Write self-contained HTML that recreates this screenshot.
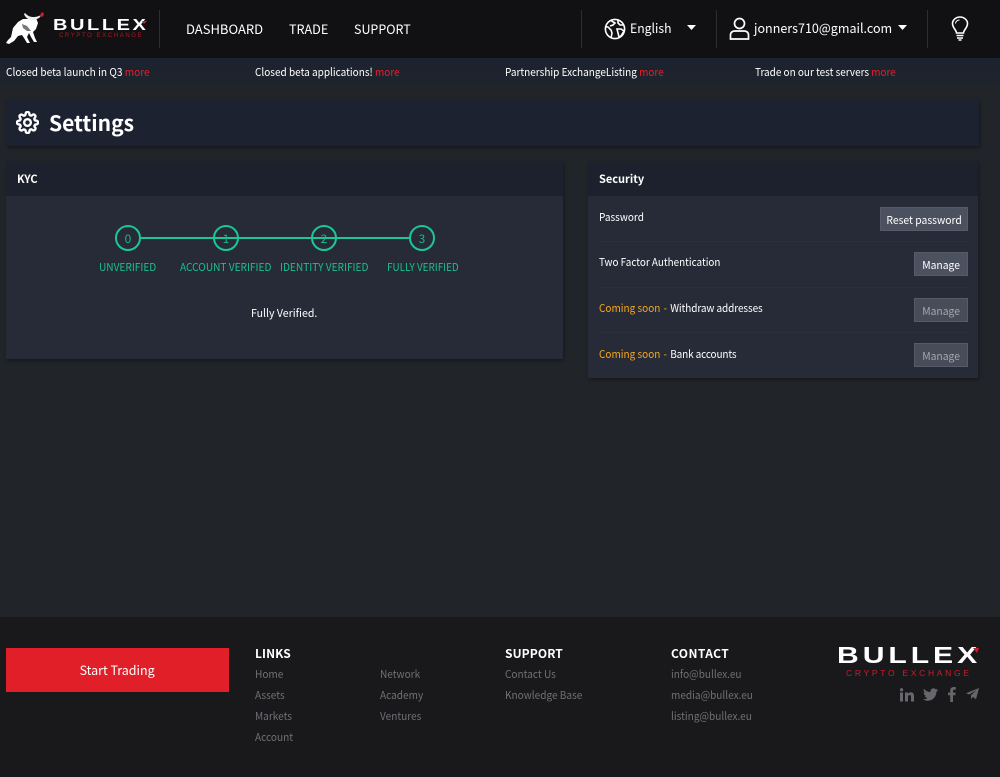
<!DOCTYPE html>
<html><head><meta charset="utf-8"><style>
html,body{margin:0;padding:0;width:1000px;height:777px;overflow:hidden;background:#212429}
body{position:relative;font-family:"Noto Sans CJK JP","Liberation Sans",sans-serif;color:#fff}
.a,.t{position:absolute}
.t{white-space:nowrap;line-height:16px;transform-origin:0 50%}
.r{color:#ee1c25}
.sep{position:absolute;top:10px;width:1px;height:38px;background:#2b2e33}
.g{color:#1bbf8f;font-size:11px;line-height:14px;position:absolute;top:260px;white-space:nowrap;transform:scaleX(.92);transform-origin:0 50%}
.c{position:absolute;top:225px;width:22px;height:22px;border:2px solid #1dc696;border-radius:50%;color:#1ab78a;font-size:12px;line-height:23px;text-align:center}
.btn{position:absolute;background:#4b515f;border:1px solid #555b68;box-sizing:border-box;height:24px;font-size:11px;line-height:24px;text-align:center;color:#fff;white-space:nowrap}
.btn span{display:inline-block;transform:scaleX(.94)}
.dis{background:#474c58;color:#a4a7ad}
.l{font-size:11px;color:#6f7074;transform:scaleX(.915)}
.h{font-size:12px;font-weight:700;letter-spacing:.1px}
.s12{font-size:11px;transform:scaleX(.91)}
.y{color:#f5a81c}
.line{position:absolute;left:599px;width:369px;height:1px;background:#2a2f3b}
</style></head><body>
<div class="a" style="left:0;top:0;width:1000px;height:58px;background:#111114"></div>
<div class="a" style="left:0;top:58px;width:1000px;height:28px;background:linear-gradient(#1c2230,#1f242c)"></div>

<svg class="a" style="left:0;top:0" width="50" height="50" viewBox="0 0 50 50"><path d="M6 43l2-3 3-3 2-9 5-6 5-3 7 0 6-1 2 5-2 6-3 3 2 6 2 4h-3l-3-5-2-4-2 4 3 6h-3l-3-5-2-3-4 1-4 5-5 3z" fill="#fff"/><path d="M25 13c2 2 4 4 8 4 4 0 6-1 8-2l-1 2c-2 2-5 3-8 3-4 0-7-3-8-6z" fill="#eee"/><path d="M40 16l1-3 2-1 1 3-2 2z" fill="#d01c24"/><path d="M22 24l5 2 4 5-4 0-4-3z" fill="#777"/></svg>

<div class="t" style="left:53px;top:18px;font-family:'Liberation Sans',sans-serif;font-weight:700;font-size:15.5px;line-height:16px;letter-spacing:2px;transform:scaleX(1.29);transform-origin:0 0">BULLEX</div>
<div class="t" style="left:59px;top:33px;font-family:'Liberation Sans',sans-serif;font-size:6px;line-height:7px;letter-spacing:1.6px;color:#a81a22">CRYPTO EXCHANGE</div>
<svg class="a" style="left:140px;top:20px" width="7" height="5"><path d="M2 1h5L4 4z" fill="#d01c24"/></svg>

<div class="sep" style="left:159px"></div>
<div class="t" style="left:186px;top:21px;font-size:13px">DASHBOARD</div>
<div class="t" style="left:289px;top:21px;font-size:13px;transform:scaleX(.97)">TRADE</div>
<div class="t" style="left:354px;top:21px;font-size:13px;transform:scaleX(.96)">SUPPORT</div>
<div class="sep" style="left:581px"></div>
<div class="sep" style="left:716px"></div>
<div class="sep" style="left:927px"></div>

<svg class="a" style="left:604px;top:18px" width="22" height="22" viewBox="0 0 22 22" fill="none" stroke="#fff" stroke-width="1.6"><circle cx="11" cy="11" r="9.6"/><path d="M2 9c3-1 3 2 5 3l1 3-1 5M7 2c1 2 3 2 4 3l-2 2-3 1M14 2l0 3 2 2 4 0M13 11l4 0 3 2-3 5-2 1-1-4z"/></svg>
<div class="t" style="left:630px;top:20px;font-size:13px;transform:scaleX(.94)">English</div>
<svg class="a" style="left:687px;top:25px" width="9" height="6"><path d="M0 0h9L4.500 5z" fill="#fff"/></svg>

<svg class="a" style="left:729px;top:17px" width="21" height="23" viewBox="0 0 21 23" fill="none" stroke="#fff" stroke-width="1.700"><circle cx="10.500" cy="6.500" r="5"/><path d="M1.500 22v-4c0-2.500 2-4 4-4h10c2 0 4 1.500 4 4v4z"/></svg>
<div class="t" style="left:754px;top:20px;font-size:13px;transform:scaleX(.965)">jonners710@gmail.com</div>
<svg class="a" style="left:898px;top:25px" width="9" height="6"><path d="M0 0h9L4.500 5z" fill="#fff"/></svg>

<svg class="a" style="left:951px;top:16px" width="18" height="25" viewBox="0 0 18 25" fill="none" stroke="#fff" stroke-width="1.600"><path d="M5.500 17c0-3-4-5-4-9.500C1.500 4 5 1 9 1s7.500 3 7.500 6.500c0 4.500-4 6.500-4 9.500z"/><path d="M5.500 19.500h7M6 22h6M7.500 24h3"/><path d="M4.500 7.500C4.500 5.500 6.500 4 8.500 4" stroke-width="1"/></svg>

<div class="t s12" style="left:6px;top:64px;transform:scaleX(.92)">Closed beta launch in Q3 <span class="r">more</span></div>
<div class="t s12" style="left:255px;top:64px">Closed beta applications! <span class="r">more</span></div>
<div class="t s12" style="left:505px;top:64px">Partnership ExchangeListing <span class="r">more</span></div>
<div class="t s12" style="left:755px;top:64px;transform:scaleX(.905)">Trade on our test servers <span class="r">more</span></div>

<div class="a" style="left:6px;top:99px;width:973px;height:47px;background:#1c2230;box-shadow:1px 2px 3px rgba(0,0,0,.3)"></div>
<svg class="a" style="left:16px;top:111px" width="23" height="23" viewBox="0 0 24 24" fill="none" stroke="#fff" stroke-width="2.500" stroke-linejoin="round"><circle cx="12" cy="12" r="3.500"/><path d="M19.400 15a1.650 1.650 0 0 0 .33 1.820l.06.06a2 2 0 0 1 0 2.830 2 2 0 0 1-2.830 0l-.06-.06a1.650 1.650 0 0 0-1.820-.33 1.650 1.650 0 0 0-1 1.510V21a2 2 0 0 1-2 2 2 2 0 0 1-2-2v-.09A1.650 1.650 0 0 0 9 19.400a1.650 1.650 0 0 0-1.820.33l-.06.06a2 2 0 0 1-2.830 0 2 2 0 0 1 0-2.830l.06-.06a1.650 1.650 0 0 0 .33-1.820 1.650 1.650 0 0 0-1.510-1H3a2 2 0 0 1-2-2 2 2 0 0 1 2-2h.09A1.650 1.650 0 0 0 4.600 9a1.650 1.650 0 0 0-.33-1.820l-.06-.06a2 2 0 0 1 0-2.830 2 2 0 0 1 2.830 0l.06.06a1.650 1.650 0 0 0 1.820.33H9a1.650 1.650 0 0 0 1-1.510V3a2 2 0 0 1 2-2 2 2 0 0 1 2 2v.09a1.650 1.650 0 0 0 1 1.510 1.650 1.650 0 0 0 1.820-.33l.06-.06a2 2 0 0 1 2.830 0 2 2 0 0 1 0 2.830l-.06.06a1.650 1.650 0 0 0-.33 1.820V9a1.650 1.650 0 0 0 1.510 1H21a2 2 0 0 1 2 2 2 2 0 0 1-2 2h-.09a1.650 1.650 0 0 0-1.510 1z"/></svg>
<div class="t" style="left:49px;top:107px;font-size:21px;line-height:32px;font-weight:700">Settings</div>

<div class="a" style="left:6px;top:161px;width:557px;height:198px;background:#262b37;box-shadow:1px 2px 3px rgba(0,0,0,.3)"></div>
<div class="a" style="left:6px;top:161px;width:557px;height:35px;background:#1c212d"></div>
<div class="t" style="left:17px;top:171px;font-size:11px;font-weight:700">KYC</div>
<div class="a" style="left:140px;top:237px;width:270px;height:2px;background:#1dc696"></div>
<div class="c" style="left:115px">0</div><div class="c" style="left:213px">1</div><div class="c" style="left:311px">2</div><div class="c" style="left:409px">3</div>
<div class="g" style="left:99px">UNVERIFIED</div>
<div class="g" style="left:180px">ACCOUNT VERIFIED</div>
<div class="g" style="left:280px">IDENTITY VERIFIED</div>
<div class="g" style="left:387px;transform:scaleX(.9)">FULLY VERIFIED</div>
<div class="t" style="left:251px;top:305px;font-size:11px;transform:scaleX(.96)">Fully Verified.</div>

<div class="a" style="left:588px;top:161px;width:390px;height:217px;background:#262b37;box-shadow:1px 2px 3px rgba(0,0,0,.3)"></div>
<div class="a" style="left:588px;top:161px;width:390px;height:35px;background:#1c212d"></div>
<div class="t" style="left:599px;top:171px;font-size:11px;font-weight:700">Security</div>
<div class="t s12" style="left:599px;top:209px">Password</div>
<div class="t s12" style="left:599px;top:254px;transform:scaleX(.9)">Two Factor Authentication</div>
<div class="t s12" style="left:599px;top:300px"><span class="y">Coming soon</span> <span class="y" style="margin:0 1px">-</span> <span style="letter-spacing:-.1px">Withdraw addresses</span></div>
<div class="t s12" style="left:599px;top:346px"><span class="y">Coming soon</span> <span class="y" style="margin:0 1px">-</span> <span style="letter-spacing:-.15px">Bank accounts</span></div>
<div class="line" style="top:241px"></div><div class="line" style="top:287px"></div><div class="line" style="top:332px"></div>
<div class="btn" style="left:880px;top:207px;width:88px"><span>Reset password</span></div>
<div class="btn" style="left:914px;top:252px;width:54px"><span>Manage</span></div>
<div class="btn dis" style="left:914px;top:298px;width:54px"><span>Manage</span></div>
<div class="btn dis" style="left:914px;top:343px;width:54px"><span>Manage</span></div>

<div class="a" style="left:0;top:617px;width:1000px;height:160px;background:#19191c"></div>
<div class="a" style="left:6px;top:648px;width:223px;height:44px;background:#e01f29;font-size:13px;line-height:44px;text-align:center"><span style="display:inline-block;transform:scaleX(.96)">Start Trading</span></div>
<div class="t h" style="left:255px;top:646px">LINKS</div>
<div class="t l" style="left:255px;top:666px">Home</div><div class="t l" style="left:255px;top:687px">Assets</div><div class="t l" style="left:255px;top:708px">Markets</div><div class="t l" style="left:255px;top:729px">Account</div>
<div class="t l" style="left:380px;top:666px">Network</div><div class="t l" style="left:380px;top:687px">Academy</div><div class="t l" style="left:380px;top:708px">Ventures</div>
<div class="t h" style="left:505px;top:646px">SUPPORT</div>
<div class="t l" style="left:505px;top:666px">Contact Us</div><div class="t l" style="left:505px;top:687px">Knowledge Base</div>
<div class="t h" style="left:671px;top:646px;letter-spacing:.4px">CONTACT</div>
<div class="t l" style="left:671px;top:666px">info@bullex.eu</div><div class="t l" style="left:671px;top:687px">media@bullex.eu</div><div class="t l" style="left:671px;top:708px">listing@bullex.eu</div>

<div class="t" style="left:837px;top:645px;font-family:'Liberation Sans',sans-serif;font-weight:700;font-size:23px;line-height:20px;letter-spacing:3px;transform:scaleX(1.31);transform-origin:0 0">BULLEX</div>
<div class="t" style="left:846px;top:668px;font-family:'Liberation Sans',sans-serif;font-size:8.500px;line-height:10px;letter-spacing:2.700px;color:#c81e28">CRYPTO EXCHANGE</div>
<svg class="a" style="left:971px;top:647px" width="8" height="7"><path d="M2 1h6L6 6z" fill="#d01c24"/></svg>

<svg class="a" style="left:900px;top:688px" width="14" height="14" viewBox="0 0 14 14" fill="#66676b"><rect x="0" y="4.500" width="3" height="9"/><circle cx="1.500" cy="1.800" r="1.700"/><path d="M5 4.500h3v1.300C8.600 4.800 9.700 4.300 10.800 4.300 13 4.300 14 5.800 14 8v5.500h-3V8.500C11 7.500 10.500 7 9.700 7 8.700 7 8 7.700 8 8.800v4.700H5z"/></svg>
<svg class="a" style="left:923px;top:688px" width="15" height="13" viewBox="0 0 24 20" fill="#66676b"><path d="M24 2.400c-.9.400-1.800.7-2.800.8 1-.6 1.800-1.600 2.200-2.700-1 .6-2 1-3.100 1.200A4.900 4.900 0 0 0 12 6.200C8 6 4.300 4.100 1.700.9.400 3.200 1 6 3.200 7.500c-.8 0-1.600-.2-2.200-.6 0 2.400 1.700 4.400 3.900 4.900-.7.200-1.500.2-2.200.1.600 2 2.400 3.400 4.600 3.400A9.900 9.900 0 0 1 0 17.800 14 14 0 0 0 7.500 20c9 0 14.200-7.600 13.900-14.500 1-.7 1.900-1.600 2.600-2.600z"/></svg>
<svg class="a" style="left:948px;top:687px" width="8" height="15" viewBox="0 0 8 15" fill="#66676b"><path d="M2.200 15V8.300H0V5.600h2.200V3.700C2.200 1.400 3.600 0 5.700 0c1 0 1.900.1 2.100.1v2.500H6.400c-1.100 0-1.400.6-1.400 1.300v1.700h2.700l-.4 2.700H5V15z"/></svg>
<svg class="a" style="left:966px;top:688px" width="13" height="12" viewBox="0 0 13 12" fill="#66676b"><path d="M13 0L0 5.200l3.300 1.300L10.500 2 5 7.200v4l2-2.300 3 2.300z"/></svg>
</body></html>
